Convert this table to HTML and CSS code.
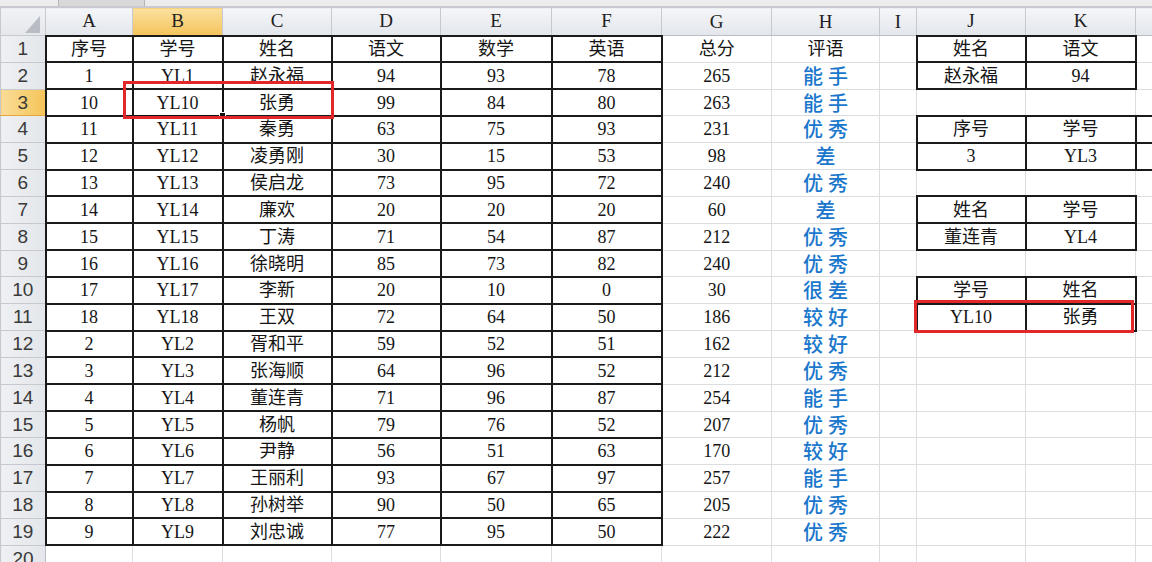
FILE: index.html
```html
<!DOCTYPE html>
<html lang="zh-CN">
<head>
<meta charset="utf-8">
<title>Sheet</title>
<link rel="stylesheet" href="styles.css">
</head>
<body>
<div class="wrap">
  <div class="topbar"><div class="tab"></div></div>
  <table class="sheet">
    <colgroup>
      <col class="w-rh"><col class="w-a"><col class="w-b"><col class="w-c"><col class="w-d"><col class="w-e"><col class="w-f"><col class="w-g"><col class="w-h"><col class="w-i"><col class="w-j"><col class="w-k"><col class="w-l">
    </colgroup>
    <thead>
      <tr class="hdr">
        <th class="corner"><svg width="15" height="17" viewBox="0 0 15 17"><polygon points="15,0 15,17 0,17" fill="#b9bdc3"/></svg></th>
        <th class="ch">A</th><th class="ch sel">B</th><th class="ch">C</th><th class="ch">D</th><th class="ch">E</th><th class="ch">F</th><th class="ch">G</th><th class="ch">H</th><th class="ch">I</th><th class="ch">J</th><th class="ch">K</th><th class="ch"></th>
      </tr>
    </thead>
    <tbody>
      <tr><th class="rh">1</th><td class="b">序号</td><td class="b">学号</td><td class="b">姓名</td><td class="b">语文</td><td class="b">数学</td><td class="b">英语</td><td>总分</td><td>评语</td><td></td><td class="b">姓名</td><td class="b">语文</td><td></td></tr>
      <tr><th class="rh">2</th><td class="b">1</td><td class="b">YL1</td><td class="b">赵永福</td><td class="b">94</td><td class="b">93</td><td class="b">78</td><td>265</td><td class="pj">能手</td><td></td><td class="b">赵永福</td><td class="b">94</td><td></td></tr>
      <tr><th class="rh sel">3</th><td class="b">10</td><td class="b act">YL10<span class="handle"></span></td><td class="b">张勇</td><td class="b">99</td><td class="b">84</td><td class="b">80</td><td>263</td><td class="pj">能手</td><td></td><td></td><td></td><td></td></tr>
      <tr><th class="rh">4</th><td class="b">11</td><td class="b">YL11</td><td class="b">秦勇</td><td class="b">63</td><td class="b">75</td><td class="b">93</td><td>231</td><td class="pj">优秀</td><td></td><td class="b">序号</td><td class="b">学号</td><td class="b"></td></tr>
      <tr><th class="rh">5</th><td class="b">12</td><td class="b">YL12</td><td class="b">凌勇刚</td><td class="b">30</td><td class="b">15</td><td class="b">53</td><td>98</td><td class="pj">差</td><td></td><td class="b">3</td><td class="b">YL3</td><td class="b"></td></tr>
      <tr><th class="rh">6</th><td class="b">13</td><td class="b">YL13</td><td class="b">侯启龙</td><td class="b">73</td><td class="b">95</td><td class="b">72</td><td>240</td><td class="pj">优秀</td><td></td><td></td><td></td><td></td></tr>
      <tr><th class="rh">7</th><td class="b">14</td><td class="b">YL14</td><td class="b">廉欢</td><td class="b">20</td><td class="b">20</td><td class="b">20</td><td>60</td><td class="pj">差</td><td></td><td class="b">姓名</td><td class="b">学号</td><td></td></tr>
      <tr><th class="rh">8</th><td class="b">15</td><td class="b">YL15</td><td class="b">丁涛</td><td class="b">71</td><td class="b">54</td><td class="b">87</td><td>212</td><td class="pj">优秀</td><td></td><td class="b">董连青</td><td class="b">YL4</td><td></td></tr>
      <tr><th class="rh">9</th><td class="b">16</td><td class="b">YL16</td><td class="b">徐晓明</td><td class="b">85</td><td class="b">73</td><td class="b">82</td><td>240</td><td class="pj">优秀</td><td></td><td></td><td></td><td></td></tr>
      <tr><th class="rh">10</th><td class="b">17</td><td class="b">YL17</td><td class="b">李新</td><td class="b">20</td><td class="b">10</td><td class="b">0</td><td>30</td><td class="pj">很差</td><td></td><td class="b">学号</td><td class="b">姓名</td><td></td></tr>
      <tr><th class="rh">11</th><td class="b">18</td><td class="b">YL18</td><td class="b">王双</td><td class="b">72</td><td class="b">64</td><td class="b">50</td><td>186</td><td class="pj">较好</td><td></td><td class="b">YL10</td><td class="b">张勇</td><td></td></tr>
      <tr><th class="rh">12</th><td class="b">2</td><td class="b">YL2</td><td class="b">胥和平</td><td class="b">59</td><td class="b">52</td><td class="b">51</td><td>162</td><td class="pj">较好</td><td></td><td></td><td></td><td></td></tr>
      <tr><th class="rh">13</th><td class="b">3</td><td class="b">YL3</td><td class="b">张海顺</td><td class="b">64</td><td class="b">96</td><td class="b">52</td><td>212</td><td class="pj">优秀</td><td></td><td></td><td></td><td></td></tr>
      <tr><th class="rh">14</th><td class="b">4</td><td class="b">YL4</td><td class="b">董连青</td><td class="b">71</td><td class="b">96</td><td class="b">87</td><td>254</td><td class="pj">能手</td><td></td><td></td><td></td><td></td></tr>
      <tr><th class="rh">15</th><td class="b">5</td><td class="b">YL5</td><td class="b">杨帆</td><td class="b">79</td><td class="b">76</td><td class="b">52</td><td>207</td><td class="pj">优秀</td><td></td><td></td><td></td><td></td></tr>
      <tr><th class="rh">16</th><td class="b">6</td><td class="b">YL6</td><td class="b">尹静</td><td class="b">56</td><td class="b">51</td><td class="b">63</td><td>170</td><td class="pj">较好</td><td></td><td></td><td></td><td></td></tr>
      <tr><th class="rh">17</th><td class="b">7</td><td class="b">YL7</td><td class="b">王丽利</td><td class="b">93</td><td class="b">67</td><td class="b">97</td><td>257</td><td class="pj">能手</td><td></td><td></td><td></td><td></td></tr>
      <tr><th class="rh">18</th><td class="b">8</td><td class="b">YL8</td><td class="b">孙树举</td><td class="b">90</td><td class="b">50</td><td class="b">65</td><td>205</td><td class="pj">优秀</td><td></td><td></td><td></td><td></td></tr>
      <tr><th class="rh">19</th><td class="b">9</td><td class="b">YL9</td><td class="b">刘忠诚</td><td class="b">77</td><td class="b">95</td><td class="b">50</td><td>222</td><td class="pj">优秀</td><td></td><td></td><td></td><td></td></tr>
      <tr><th class="rh">20</th><td></td><td></td><td></td><td></td><td></td><td></td><td></td><td></td><td></td><td></td><td></td><td></td></tr>
    </tbody>
  </table>
  <div class="redbox box1"></div>
  <div class="redbox box2"></div>
</div>
</body>
</html>
```
FILE: styles.css
```css
html, body {
  margin: 0;
  padding: 0;
  background: #fff;
  overflow: hidden;
}
.wrap {
  position: relative;
  width: 1152px;
  height: 562px;
  overflow: hidden;
}
.topbar {
  height: 6px;
  background: #ececec;
  border-bottom: 1px solid #c9cbce;
  display: flex;
}
.tab {
  margin-left: 58px;
  width: 85px;
  height: 6px;
  background: #d9d9d9;
  border-left: 1px solid #b5b5b5;
  border-right: 1px solid #b5b5b5;
}
.sheet {
  border-collapse: collapse;
  table-layout: fixed;
  width: 1245px;
  font-family: "Liberation Serif", "Noto Sans CJK SC", serif;
  font-size: 18px;
  color: #151515;
}
.w-rh { width: 45px; }
.w-a { width: 87px; }
.w-b { width: 90px; }
.w-c { width: 109px; }
.w-d { width: 109px; }
.w-e { width: 111px; }
.w-f { width: 110px; }
.w-g { width: 110px; }
.w-h { width: 108px; }
.w-i { width: 37px; }
.w-j { width: 109px; }
.w-k { width: 110px; }
.w-l { width: 110px; }
.sheet td, .sheet th {
  border: 1px solid #dcdde0;
  padding: 0;
  text-align: center;
  vertical-align: middle;
  white-space: nowrap;
  font-weight: normal;
  line-height: 20px;
}
.sheet tbody tr { height: 26.83px; }
.hdr { height: 28px; }
.sheet th.ch {
  background: linear-gradient(#f4f6f9, #e3e6eb);
  border-color: #c6cad0;
  border-bottom-color: #b9bec6;
  font-family: "Liberation Serif", serif;
  font-size: 19px;
  color: #222;
}
.sheet th.corner {
  background: linear-gradient(#f1f3f6, #e4e7eb);
  border-color: #c6cad0;
  text-align: right;
  vertical-align: bottom;
  padding: 0 5px 2px 0;
}
.corner svg { display: block; margin-left: auto; }
.sheet th.rh {
  background: linear-gradient(90deg, #eef0f3, #e3e6ea);
  border-color: #c6cad0;
  border-right-color: #b9bec6;
  font-family: "Liberation Sans", sans-serif;
  font-size: 19px;
  color: #3a3a3a;
}
.sheet th.sel {
  background: linear-gradient(#fae0a0, #f4c45a);
  border-bottom-color: #e5a63a;
}
.sheet th.rh.sel {
  background: linear-gradient(90deg, #f9dc98, #f4c458);
  border-right-color: #e5a63a;
}
.sheet td.b {
  border: 2px solid #1a1a1a;
}
.sheet td.act {
  position: relative;
  border: 2px solid #111;
}
.handle {
  position: absolute;
  right: -4px;
  bottom: -4px;
  width: 5px;
  height: 5px;
  background: #111;
  border: 1px solid #fff;
}
.sheet td.pj {
  font-family: "Noto Sans CJK SC", sans-serif;
  font-weight: 500;
  font-size: 20px;
  color: #1a77cc;
  letter-spacing: 5px;
  padding-left: 5px;
}
.redbox {
  position: absolute;
  box-sizing: border-box;
  border: 3px solid #e2272b;
}
.box1 {
  left: 123px;
  top: 81px;
  width: 211px;
  height: 38px;
}
.box2 {
  left: 914px;
  top: 300px;
  width: 220px;
  height: 33px;
}
```
